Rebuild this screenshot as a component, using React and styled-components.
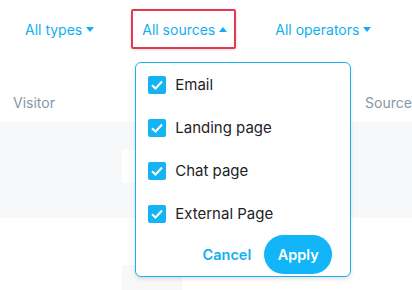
import styled, { createGlobalStyle } from "styled-components"

const GlobalStyle = createGlobalStyle`
    body{
        margin:0;
        background:#ffffff;
        font-family:Inter, "Liberation Sans", sans-serif;
    }
`
const Page = styled.div`
    width:412px;
    height:290px;
    overflow:hidden;
    position:relative;
`
const FilterBar = styled.div`
    display:flex;
    align-items:center;
    gap:28px;
    padding:9px 0 0 14px;
    height:40px;
`
const FilterWrap = styled.div`
    position:relative;
`
const FilterButton = styled.button`
    display:flex;
    align-items:center;
    gap:4px;
    height:40px;
    padding:0 7px 0 9px;
    background:none;
    border:2px solid ${p => (p.$active ? "#e8384f" : "transparent")};
    border-radius:2px;
    box-shadow:${p => (p.$active ? "0 1px 3px rgba(0,0,0,0.15)" : "none")};
    color:#12aff0;
    font-family:inherit;
    font-size:14px;
    cursor:pointer;
`
const HeaderRow = styled.div`
    display:flex;
    justify-content:space-between;
    padding:45px 0 0 13px;
    height:28px;
    color:#8796a8;
    font-size:14px;
`
const HeaderCell = styled.span`
    width:${p => p.$width || "auto"};
`
const Band = styled.div`
    height:96px;
    background:#f6f8fa;
    padding-top:28px;
    box-sizing:border-box;
`
const BandCell = styled.div`
    margin-left:122px;
    width:60px;
    height:33px;
    background:#ffffff;
`
const LowerCell = styled.div`
    margin:47px 0 0 122px;
    width:60px;
    height:30px;
    background:#f8f8f8;
`
const Panel = styled.div`
    position:absolute;
    left:4px;
    top:53px;
    width:216px;
    height:215px;
    box-sizing:border-box;
    background:#ffffff;
    border:1px solid #16b1f2;
    border-radius:6px;
    box-shadow:0 2px 4px rgba(0,0,0,0.12);
    display:flex;
    flex-direction:column;
    z-index:2;
`
const Option = styled.label`
    display:flex;
    flex-shrink:0;
    align-items:center;
    gap:9px;
    height:43px;
    padding-left:12px;
    color:#1e2227;
    font-size:15px;
`
const Box = styled.span`
    width:18px;
    height:18px;
    background:#14b4f4;
    border-radius:2px;
    display:flex;
    align-items:center;
    justify-content:center;
`
const Footer = styled.div`
    display:flex;
    align-items:center;
    justify-content:flex-end;
    gap:13px;
    padding:0 18px 2px 0;
    flex:1;
`
const CancelButton = styled.button`
    background:none;
    border:none;
    padding:0;
    color:#14aff0;
    font-family:inherit;
    font-size:14.5px;
    font-weight:600;
`
const ApplyButton = styled.button`
    width:68px;
    height:39px;
    border:none;
    border-radius:20px;
    background:#12b6f8;
    color:#ffffff;
    font-family:inherit;
    font-size:14.5px;
    font-weight:600;
`

const Caret = ({ up }) => (
    <svg width="8" height="5" viewBox="0 0 8 5">
        <path d={up ? "M0 5 L4 0 L8 5 Z" : "M0 0 L8 0 L4 5 Z"} fill="#12aff0" />
    </svg>
)

const Check = () => (
    <svg width="14" height="14" viewBox="0 0 14 14">
        <path d="M2 7.2 L5.5 10.5 L12 3.5" fill="none" stroke="#fff" strokeWidth="2" />
    </svg>
)

const sources = ["Email", "Landing page", "Chat page", "External Page"]

const App = () => {
    return (
        <Page>
            <GlobalStyle />
            <FilterBar>
                <FilterWrap>
                    <FilterButton>All types <Caret /></FilterButton>
                </FilterWrap>
                <FilterWrap>
                    <FilterButton $active>All sources <Caret up /></FilterButton>
                    <Panel>
                        {sources.map(s => (
                            <Option key={s}>
                                <Box><Check /></Box>
                                {s}
                            </Option>
                        ))}
                        <Footer>
                            <CancelButton>Cancel</CancelButton>
                            <ApplyButton>Apply</ApplyButton>
                        </Footer>
                    </Panel>
                </FilterWrap>
                <FilterWrap>
                    <FilterButton>All operators <Caret /></FilterButton>
                </FilterWrap>
            </FilterBar>
            <HeaderRow>
                <HeaderCell>Visitor</HeaderCell>
                <HeaderCell $width="47px">Source</HeaderCell>
            </HeaderRow>
            <Band>
                <BandCell />
            </Band>
            <LowerCell />
        </Page>
    )
}
export default App
